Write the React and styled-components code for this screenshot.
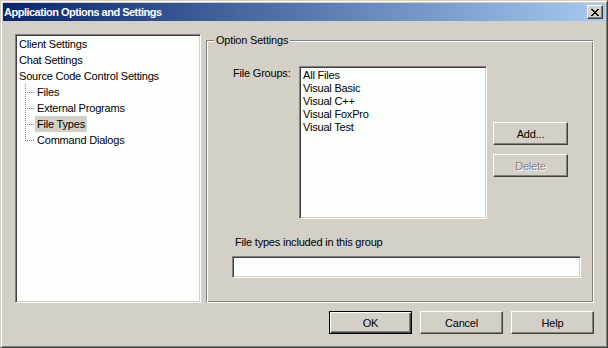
import React from 'react'
import styled, { createGlobalStyle, css } from 'styled-components'

const GlobalStyle = createGlobalStyle`
  html, body {
    margin: 0;
    padding: 0;
    background: #d4d0c8;
  }
`

const raised = css`
  border: 1px solid;
  border-color: #ffffff #404040 #404040 #ffffff;
  box-shadow: inset -1px -1px #808080;
`

const sunken = css`
  border: 1px solid;
  border-color: #808080 #ffffff #ffffff #808080;
  box-shadow: inset 1px 1px #404040, inset -1px -1px #d4d0c8;
  background: #fcfefc;
`

const Window = styled.div`
  width: 608px;
  height: 348px;
  box-sizing: border-box;
  border: 1px solid;
  border-color: #d4d0c8 #404040 #404040 #d4d0c8;
  box-shadow: inset 1px 1px #ffffff, inset -1px -1px #808080;
  padding: 2px;
  background: #d4d0c8;
  display: flex;
  flex-direction: column;
  font-family: "Liberation Sans", Arial, sans-serif;
  font-size: 11px;
  letter-spacing: -0.2px;
  color: #000;
`

const TitleBar = styled.div`
  height: 18px;
  flex: none;
  display: flex;
  align-items: center;
  padding-left: 1px;
  background: linear-gradient(to right, #0a246a, #a6caf0);
  color: #fff;
  font-weight: bold;
  font-size: 11px;
  letter-spacing: -0.5px;
`

const CloseButton = styled.div`
  ${raised};
  box-sizing: border-box;
  margin-left: auto;
  margin-right: 2px;
  width: 16px;
  height: 14px;
  background: #d4d0c8;
  display: flex;
  align-items: center;
  justify-content: center;
`

const Body = styled.div`
  flex: 1;
  display: flex;
  flex-direction: column;
  gap: 8px;
  padding: 13px 11px 11px 12px;
`

const Top = styled.div`
  height: 269px;
  display: flex;
  gap: 5px;
`

const Tree = styled.div`
  ${sunken};
  box-sizing: border-box;
  width: 186px;
  padding: 1px 1px;
`

const TreeRow = styled.div`
  height: 16px;
  display: flex;
  align-items: center;
  white-space: nowrap;
`

const TreeLabel = styled.span`
  padding: 0 2px;
  line-height: 16px;
  background: ${p => (p.$selected ? '#d4d0c8' : 'transparent')};
`

const GroupBox = styled.div`
  position: relative;
  flex: 1;
  margin-top: 6px;
  border: 1px solid;
  border-color: #808080 #ffffff #ffffff #808080;
  box-shadow: inset 1px 1px #ffffff, inset -1px -1px #808080;
  padding: 25px 0 0 25px;
  display: flex;
  flex-direction: column;
`

const Legend = styled.span`
  position: absolute;
  top: -7px;
  left: 7px;
  padding: 0 2px;
  line-height: 13px;
  background: #d4d0c8;
`

const GroupRow = styled.div`
  display: flex;
  align-items: flex-start;
`

const FieldLabel = styled.div`
  width: ${p => p.$width || 'auto'};
  padding-left: ${p => p.$indent || 1}px;
  padding-top: ${p => p.$top || 0}px;
  margin-top: ${p => p.$gap || 0}px;
  line-height: 13px;
  box-sizing: border-box;
`

const ListBox = styled.div`
  ${sunken};
  box-sizing: border-box;
  width: 188px;
  height: 153px;
  padding: 2px 3px;
`

const ListItem = styled.div`
  line-height: 13px;
  white-space: nowrap;
`

const SideButtons = styled.div`
  display: flex;
  flex-direction: column;
  gap: 9px;
  margin-left: 6px;
  padding-top: 56px;
`

const Button = styled.div`
  ${raised};
  box-sizing: border-box;
  width: ${p => p.$width}px;
  height: 23px;
  display: flex;
  align-items: center;
  justify-content: center;
  background: #d4d0c8;
  color: ${p => (p.$disabled ? '#808080' : '#000')};
  text-shadow: ${p => (p.$disabled ? '1px 1px #ffffff' : 'none')};
  ${p =>
    p.$default &&
    css`
      border: 1px solid #000;
      box-shadow: inset 1px 1px #ffffff, inset -1px -1px #404040, inset -2px -2px #808080;
    `}
`

const TextInput = styled.div`
  ${sunken};
  box-sizing: border-box;
  width: 349px;
  height: 22px;
  margin-top: 7px;
`

const ButtonRow = styled.div`
  display: flex;
  justify-content: flex-end;
  gap: 8px;
`

const closeGlyph = [
  'XX....XX',
  '.XX..XX.',
  '..XXXX..',
  '...XX...',
  '..XXXX..',
  '.XX..XX.',
  'XX....XX',
]

const CloseIcon = () => (
  <svg width="8" height="7" viewBox="0 0 8 7" shapeRendering="crispEdges">
    {closeGlyph.map((row, y) =>
      row.split('').map((c, x) =>
        c === 'X' ? <rect key={`${x}-${y}`} x={x} y={y} width="1" height="1" fill="#000" /> : null
      )
    )}
  </svg>
)

const Connector = ({ last }) => (
  <svg width="18" height="16" viewBox="0 0 18 16" shapeRendering="crispEdges">
    <line x1="8.5" y1="0" x2="8.5" y2={last ? 9 : 16} stroke="#808080" strokeDasharray="1 1" />
    <line x1="10" y1="8.5" x2="18" y2="8.5" stroke="#808080" strokeDasharray="1 1" />
  </svg>
)

const topItems = ['Client Settings', 'Chat Settings', 'Source Code Control Settings']
const childItems = ['Files', 'External Programs', 'File Types', 'Command Dialogs']
const fileGroups = ['All Files', 'Visual Basic', 'Visual C++', 'Visual FoxPro', 'Visual Test']

export default function App() {
  return (
    <>
      <GlobalStyle />
      <Window>
        <TitleBar>
          Application Options and Settings
          <CloseButton>
            <CloseIcon />
          </CloseButton>
        </TitleBar>
        <Body>
          <Top>
            <Tree>
              {topItems.map(t => (
                <TreeRow key={t}>
                  <TreeLabel>{t}</TreeLabel>
                </TreeRow>
              ))}
              {childItems.map((t, i) => (
                <TreeRow key={t}>
                  <Connector last={i === childItems.length - 1} />
                  <TreeLabel $selected={t === 'File Types'}>{t}</TreeLabel>
                </TreeRow>
              ))}
            </Tree>
            <GroupBox>
              <Legend>Option Settings</Legend>
              <GroupRow>
                <FieldLabel $width="67px" $top={1}>File Groups:</FieldLabel>
                <ListBox>
                  {fileGroups.map(g => (
                    <ListItem key={g}>{g}</ListItem>
                  ))}
                </ListBox>
                <SideButtons>
                  <Button $width={75}>Add...</Button>
                  <Button $width={75} $disabled>Delete</Button>
                </SideButtons>
              </GroupRow>
              <FieldLabel $indent={3} $gap={17}>File types included in this group</FieldLabel>
              <TextInput />
            </GroupBox>
          </Top>
          <ButtonRow>
            <Button $width={83} $default>OK</Button>
            <Button $width={83}>Cancel</Button>
            <Button $width={83}>Help</Button>
          </ButtonRow>
        </Body>
      </Window>
    </>
  )
}
